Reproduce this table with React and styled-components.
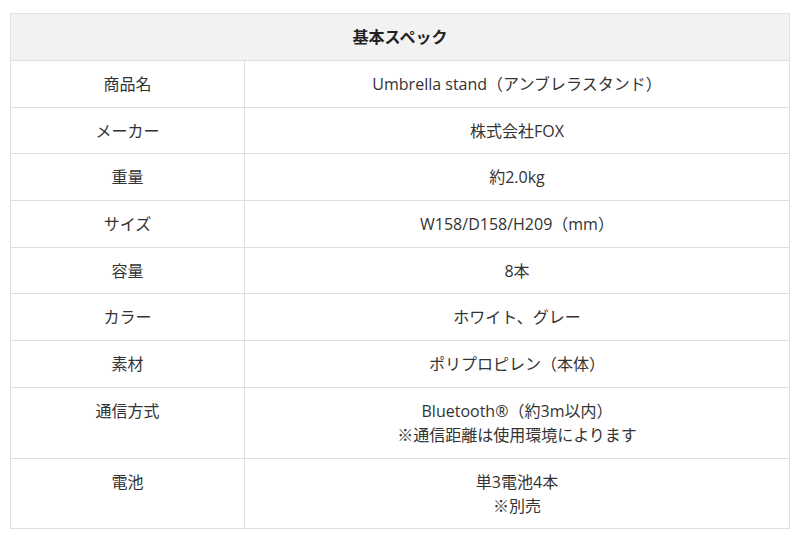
import React from "react";
import styled, { createGlobalStyle } from "styled-components";

const GlobalStyle = createGlobalStyle`
  body {
    margin: 0;
    padding: 13px 10px 0 10px;
    background: #fff;
    font-family: "Open Sans", "Noto Sans CJK JP", sans-serif;
    color: #333;
  }
`;

const specs = [
  ["商品名", ["Umbrella stand（アンブレラスタンド）"]],
  ["メーカー", ["株式会社FOX"]],
  ["重量", ["約2.0kg"]],
  ["サイズ", ["W158/D158/H209（mm）"]],
  ["容量", ["8本"]],
  ["カラー", ["ホワイト、グレー"]],
  ["素材", ["ポリプロピレン（本体）"]],
  ["通信方式", ["Bluetooth®（約3m以内）", "※通信距離は使用環境によります"]],
  ["電池", ["単3電池4本", "※別売"]],
];

function App() {
  return (
    <>
      <GlobalStyle />
      <SpecTable>
        <thead>
          <tr>
            <HeadCell colSpan={2}>基本スペック</HeadCell>
          </tr>
        </thead>
        <tbody>
          {specs.map(([label, lines]) => (
            <tr key={label}>
              <LabelCell>{label}</LabelCell>
              <ValueCell>
                {lines.map((line, i) => (
                  <Line key={i}>{line}</Line>
                ))}
              </ValueCell>
            </tr>
          ))}
        </tbody>
      </SpecTable>
    </>
  );
}

const SpecTable = styled.table`
  width: 780px;
  border-collapse: collapse;
  font-size: 16px;
  line-height: 24px;
`;

const HeadCell = styled.th`
  background: #f2f2f2;
  border: 1px solid #e0e0e0;
  padding: 11px 10px;
  font-weight: bold;
  text-align: center;
  color: #222;
`;

const LabelCell = styled.td`
  width: 213px;
  border: 1px solid #e0e0e0;
  padding: 11px 10px 10.7px;
  text-align: center;
  vertical-align: top;
`;

const ValueCell = styled.td`
  border: 1px solid #e0e0e0;
  padding: 11px 10px 10.7px;
  text-align: center;
  vertical-align: top;
`;

const Line = styled.div``;

export default App;
